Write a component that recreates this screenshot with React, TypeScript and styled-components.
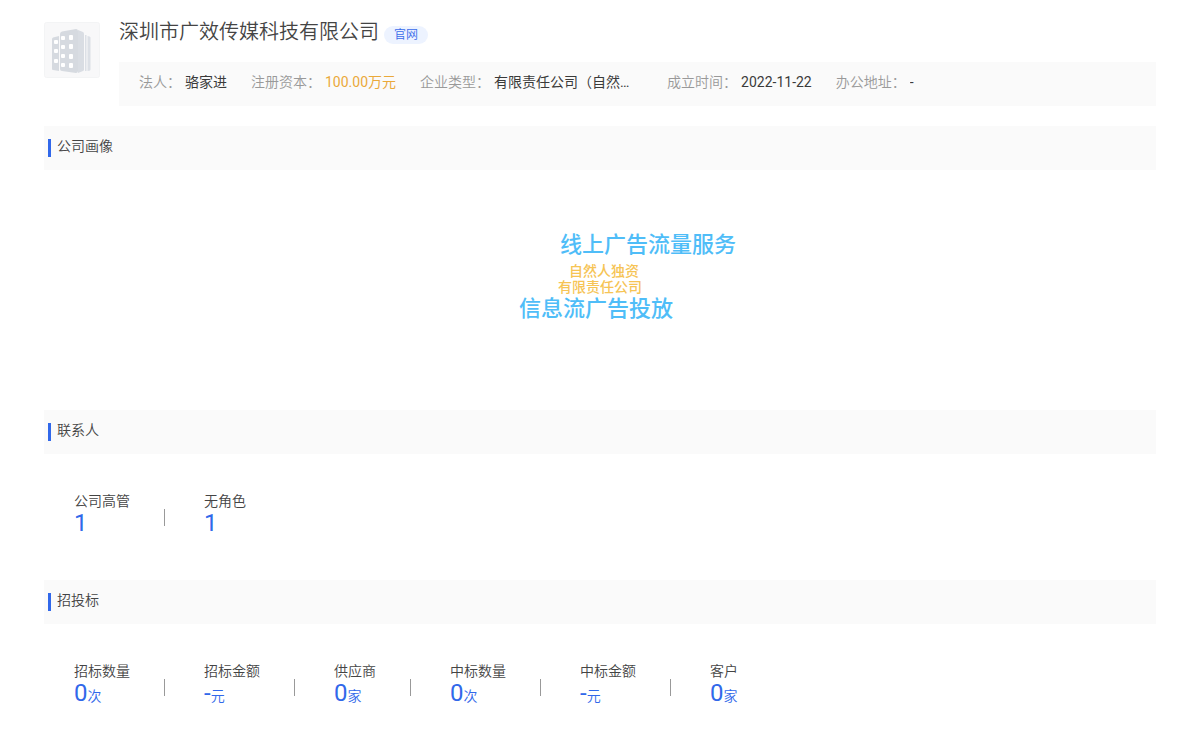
import React from 'react';
import styled, { createGlobalStyle } from 'styled-components';

const GlobalStyle = createGlobalStyle`
  * { box-sizing: border-box; }
  body {
    margin: 0;
    background: #fff;
    color: #444;
    font-family: Roboto, "Noto Sans CJK SC", sans-serif;
    font-size: 14px;
    line-height: 20px;
    font-weight: 350;
  }
  h1, h2, dl, dt, dd { margin: 0; font-weight: inherit; }
`;

const Page = styled.main`
  padding: 20px 44px 32px;
`;

const Header = styled.header`
  display: flex;
  align-items: flex-start;
  gap: 19px;
`;

const Logo = styled.svg`
  flex: none;
  width: 56px;
  height: 56px;
  margin-top: 2px;
`;

const Summary = styled.div`
  flex: 1;
  min-width: 0;
`;

const TitleRow = styled.div`
  display: flex;
  align-items: flex-end;
  gap: 5px;
  height: 24px;
`;

const Title = styled.h1`
  font-size: 20px;
  line-height: 24px;
`;

const SiteLink = styled.a`
  padding: 0 10px;
  border-radius: 9px;
  background: #edf3ff;
  color: #3a6bea;
  font-size: 12px;
  line-height: 18px;
  text-decoration: none;
`;

const Facts = styled.dl`
  display: flex;
  gap: 24px;
  height: 44px;
  margin-top: 18px;
  padding: 10px 20px;
  background: #fafafa;
`;

const Fact = styled.div`
  display: flex;
  gap: 4px;
  white-space: nowrap;
`;

const FactLabel = styled.dt`
  color: #999;
`;

const FactValue = styled.dd<{ $accent?: boolean; $wide?: boolean }>`
  width: ${(p) => (p.$wide ? '149px' : 'auto')};
  color: ${(p) => (p.$accent ? '#eaa93a' : '#3a3a3a')};
  font-weight: 400;
  overflow: hidden;
  text-overflow: ellipsis;
`;

const Section = styled.section`
  margin-top: 20px;
`;

const SectionHead = styled.div`
  display: flex;
  align-items: center;
  gap: 6px;
  height: 44px;
  padding: 0 4px;
  background: #fafafa;
  &::before {
    content: '';
    width: 3px;
    height: 18px;
    background: #3168ea;
  }
`;

const SectionTitle = styled.h2`
  font-size: 14px;
  line-height: 20px;
  padding-bottom: 4px;
`;

const Cloud = styled.div`
  position: relative;
  height: 220px;
`;

const Word = styled.span<{ $x: number; $y: number; $main?: boolean }>`
  position: absolute;
  left: calc(50% + ${(p) => p.$x}px);
  top: ${(p) => p.$y}px;
  color: ${(p) => (p.$main ? '#4fbdf8' : '#f6c455')};
  font-size: ${(p) => (p.$main ? 22 : 14)}px;
  line-height: ${(p) => (p.$main ? 24 : 16)}px;
  font-weight: 500;
  white-space: nowrap;
`;

const Stats = styled.dl`
  display: flex;
  padding: 37px 30px 24px;
  height: 106px;
`;

const Stat = styled.div`
  display: flex;
  flex-direction: column;
`;

const Divider = styled.div`
  width: 1px;
  height: 17px;
  margin: 18px 39px 0 34px;
  background: #999;
`;

const StatValue = styled.dd`
  color: #3168ea;
  font-size: 24px;
  line-height: 24px;
  font-weight: 400;
`;

const Unit = styled.span`
  font-size: 14px;
  font-weight: 350;
`;

const facts = [
  { label: '法人', value: '骆家进' },
  { label: '注册资本', value: '100.00万元', accent: true },
  { label: '企业类型', value: '有限责任公司（自然人独资）', wide: true },
  { label: '成立时间', value: '2022-11-22' },
  { label: '办公地址', value: '-' },
];

const words = [
  { text: '线上广告流量服务', x: -40, y: 63, main: true },
  { text: '自然人独资', x: -31, y: 93 },
  { text: '有限责任公司', x: -42, y: 109 },
  { text: '信息流广告投放', x: -81, y: 127, main: true },
];

type StatItem = { label: string; value: string; unit?: string };

const contacts: StatItem[] = [
  { label: '公司高管', value: '1' },
  { label: '无角色', value: '1' },
];

const bids: StatItem[] = [
  { label: '招标数量', value: '0', unit: '次' },
  { label: '招标金额', value: '-', unit: '元' },
  { label: '供应商', value: '0', unit: '家' },
  { label: '中标数量', value: '0', unit: '次' },
  { label: '中标金额', value: '-', unit: '元' },
  { label: '客户', value: '0', unit: '家' },
];

function StatList({ items }: { items: StatItem[] }) {
  return (
    <Stats>
      {items.map((item, i) => (
        <React.Fragment key={item.label}>
          {i > 0 && <Divider />}
          <Stat>
            <dt>{item.label}</dt>
            <StatValue>
              {item.value}
              {item.unit && <Unit>{item.unit}</Unit>}
            </StatValue>
          </Stat>
        </React.Fragment>
      ))}
    </Stats>
  );
}

function BuildingLogo() {
  return (
    <Logo viewBox="0 0 56 56" aria-hidden="true">
      <rect x="0.5" y="0.5" width="55" height="55" rx="2" fill="#f8f8f9" stroke="#f3f4f5" />
      <path d="M8 17q0-1 1-1.500l6-1.500v35l-6-1q-1 0-1-1z" fill="#d6dae0" />
      <path d="M16 12q0-2 2-2.500l14-2.500q2 0 2 2v40q0 2-2 2l-14-2q-2 0-2-2z" fill="#d6dae0" />
      <path d="M34 8l5 2q1 0.500 1 1.500v36q0 1-1 1.500l-5 2z" fill="#d9dde3" />
      <path d="M41 13h1.500v36h-1.500zM43.500 14l2 0.500q1 0.300 1 1v32q0 1-1 1.200l-2 0.300z" fill="#dce0e6" />
      <g fill="#fff">
        <rect x="10" y="18" width="4" height="4" rx="1" />
        <rect x="10" y="27" width="4" height="4" rx="1" />
        <rect x="10" y="37" width="4" height="4" rx="1" />
        <rect x="17" y="14" width="4" height="4" rx="1" />
        <rect x="17" y="23" width="4" height="4" rx="1" />
        <rect x="17" y="32" width="4" height="4" rx="1" />
        <rect x="17" y="41" width="4" height="4" rx="1" />
        <rect x="25" y="13" width="4" height="5" rx="1" />
        <rect x="25" y="22" width="4" height="5" rx="1" />
        <rect x="25" y="32" width="4" height="5" rx="1" />
        <rect x="25" y="41" width="4" height="5" rx="1" />
      </g>
    </Logo>
  );
}

export default function App() {
  return (
    <Page>
      <GlobalStyle />
      <Header>
        <BuildingLogo />
        <Summary>
          <TitleRow>
            <Title>深圳市广效传媒科技有限公司</Title>
            <SiteLink href="#">官网</SiteLink>
          </TitleRow>
          <Facts>
            {facts.map((f) => (
              <Fact key={f.label}>
                <FactLabel>{f.label}：</FactLabel>
                <FactValue $accent={f.accent} $wide={f.wide}>{f.value}</FactValue>
              </Fact>
            ))}
          </Facts>
        </Summary>
      </Header>

      <Section>
        <SectionHead><SectionTitle>公司画像</SectionTitle></SectionHead>
        <Cloud>
          {words.map((w) => (
            <Word key={w.text} $x={w.x} $y={w.y} $main={w.main}>{w.text}</Word>
          ))}
        </Cloud>
      </Section>

      <Section>
        <SectionHead><SectionTitle>联系人</SectionTitle></SectionHead>
        <StatList items={contacts} />
      </Section>

      <Section>
        <SectionHead><SectionTitle>招投标</SectionTitle></SectionHead>
        <StatList items={bids} />
      </Section>
    </Page>
  );
}
